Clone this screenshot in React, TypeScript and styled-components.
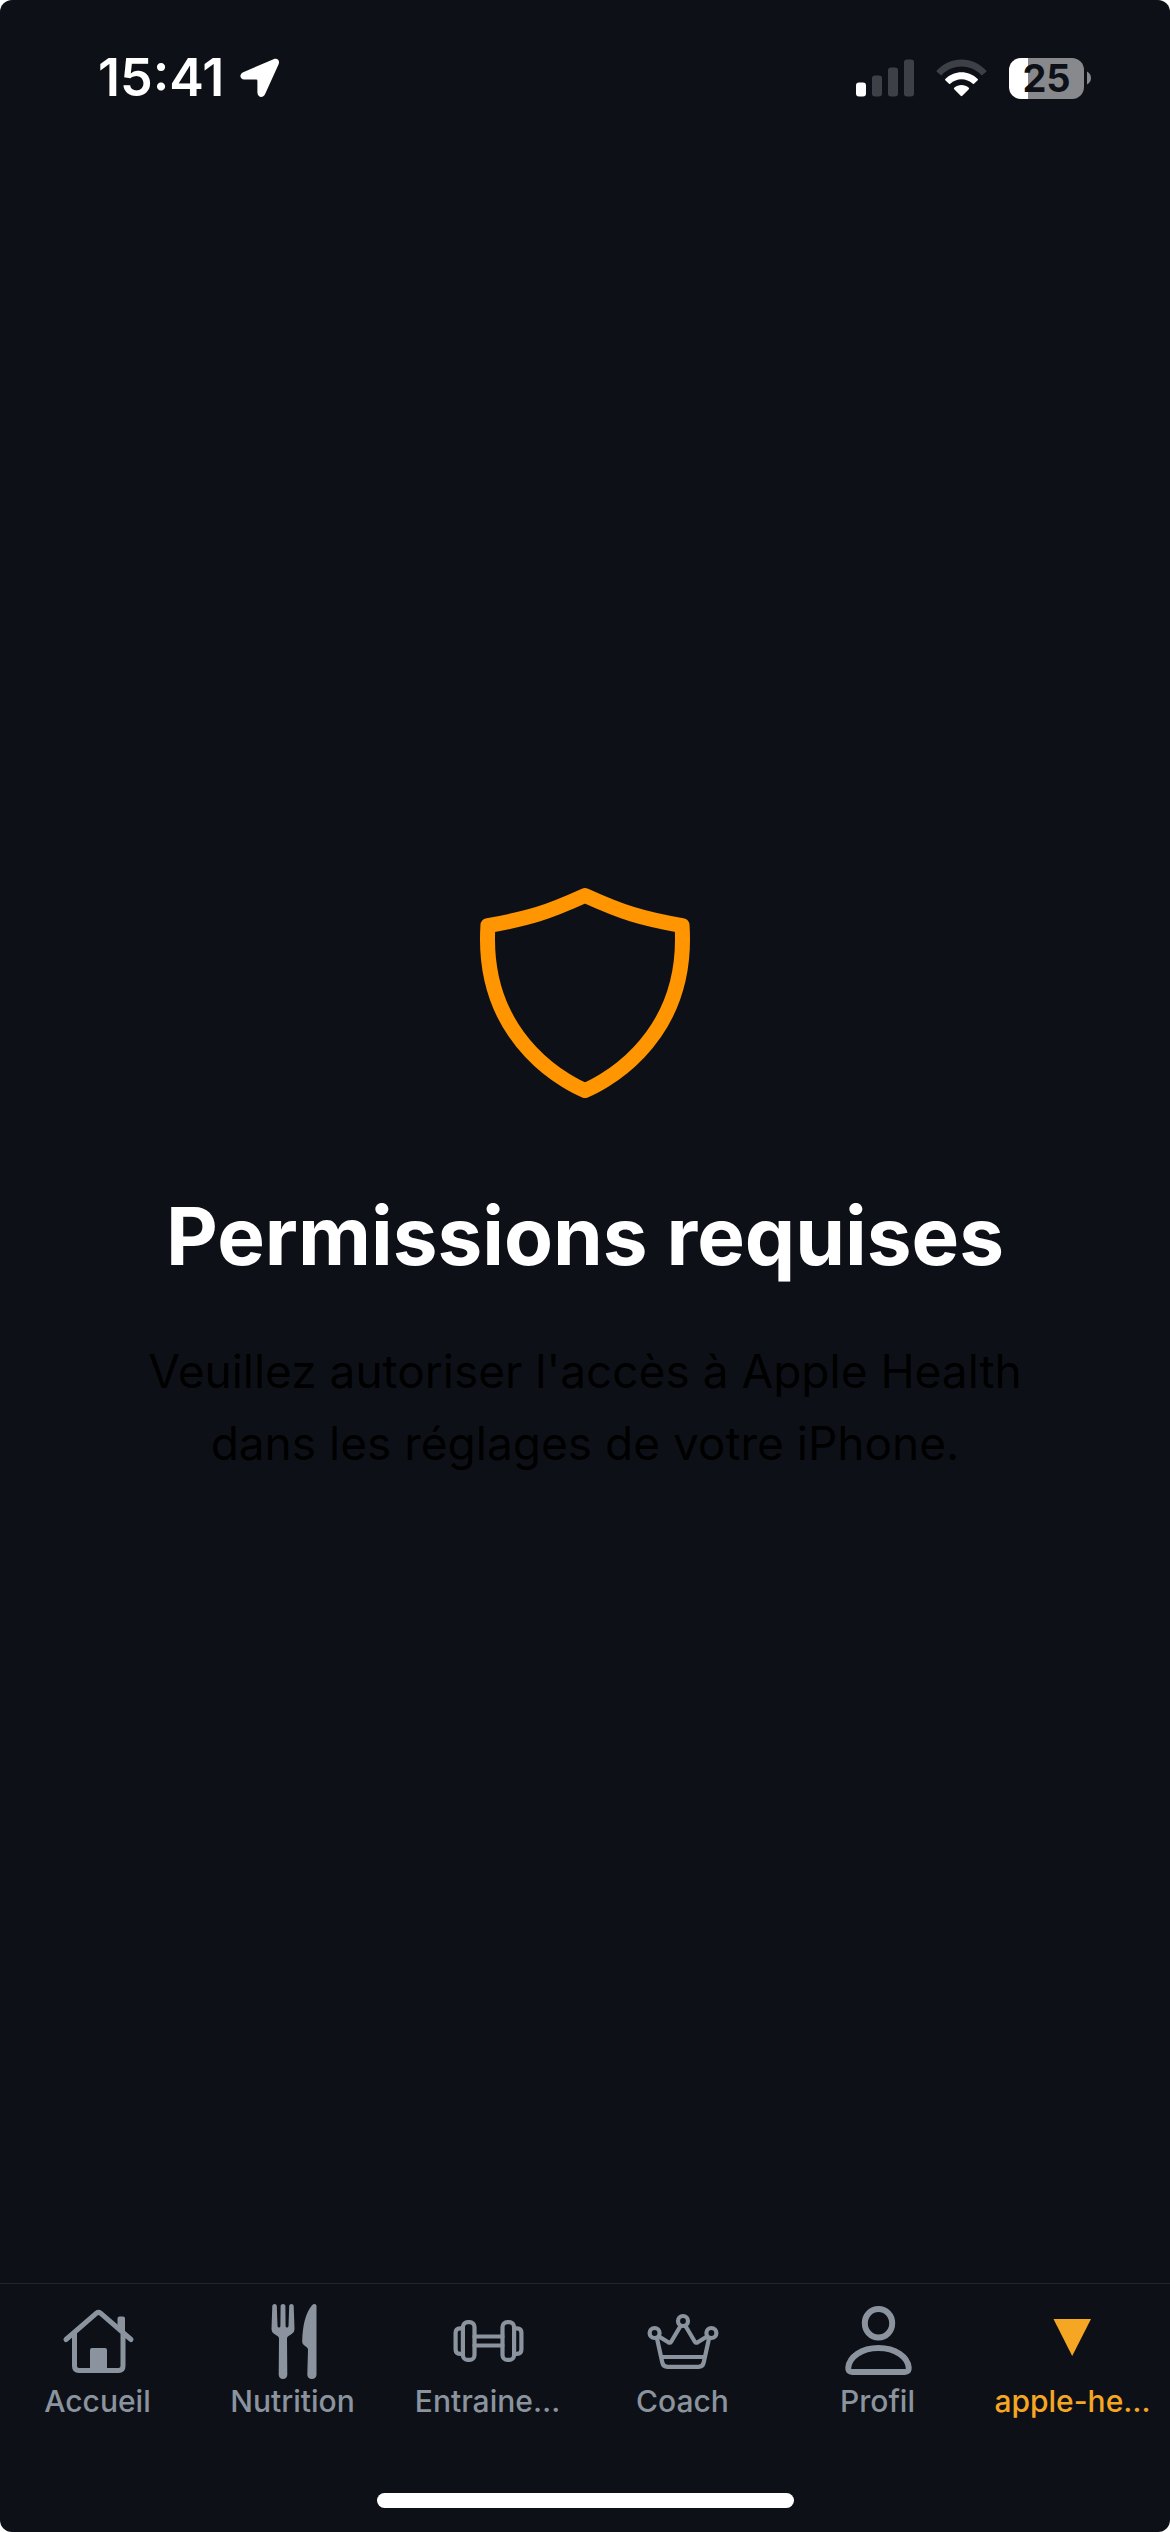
import React from "react";
import styled, { createGlobalStyle } from "styled-components";

const GlobalStyle = createGlobalStyle`
  *, *::before, *::after { box-sizing: border-box; }
  body {
    margin: 0;
    background: #fff;
    font-family: Inter, "Liberation Sans", sans-serif;
    -webkit-font-smoothing: antialiased;
  }
`;

const Screen = styled.div`
  display: flex;
  flex-direction: column;
  min-height: 100vh;
  background: #0d1117;
  border-radius: 12px;
  overflow: hidden;
`;

const StatusBar = styled.header`
  display: flex;
  align-items: center;
  justify-content: space-between;
  padding: 48px 79px 32px 98px;
  color: #fff;
`;

const StatusGroup = styled.div<{ $gap: number }>`
  display: flex;
  align-items: center;
  gap: ${(p) => p.$gap}px;
`;

const Clock = styled.time`
  font-size: 52px;
  line-height: 60px;
  font-weight: 600;
`;

const Battery = styled.div`
  display: flex;
  align-items: center;
  gap: 3px;
`;

const BatteryBody = styled.div<{ $level: number }>`
  width: 75px;
  height: 41px;
  border-radius: 12px;
  background: linear-gradient(
    to right,
    #fff ${(p) => p.$level}%,
    #88898d ${(p) => p.$level}%
  );
  color: #0d1117;
  font-size: 38px;
  line-height: 41px;
  font-weight: 700;
  text-align: center;
`;

const Main = styled.main`
  flex: 1;
  display: flex;
  flex-direction: column;
  align-items: center;
  justify-content: center;
  padding: 0 120px 72px;
  text-align: center;
`;

const Title = styled.h1`
  margin: 73px 0 49px;
  color: #fff;
  font-size: 80px;
  line-height: 100px;
  font-weight: 700;
`;

const Message = styled.p`
  margin: 0;
  max-width: 930px;
  color: #000;
  font-size: 46px;
  line-height: 72px;
`;

const TabBar = styled.nav`
  display: grid;
  grid-template-columns: repeat(6, minmax(0, 1fr));
  padding-top: 16px;
  border-top: 1px solid #21262d;
`;

const Tab = styled.button<{ $active?: boolean }>`
  display: flex;
  flex-direction: column;
  align-items: center;
  gap: 3px;
  padding: 0;
  border: 0;
  background: none;
  color: ${(p) => (p.$active ? "#f5a623" : "#8b949e")};
  font: 500 30px/36px Inter, "Liberation Sans", sans-serif;
  white-space: nowrap;
  cursor: pointer;
`;

const HomeArea = styled.footer`
  display: flex;
  justify-content: center;
  padding: 74px 0 24px;
`;

const HomeIndicator = styled.div`
  width: 417px;
  height: 15px;
  border-radius: 8px;
  background: #fff;
`;

const LocationIcon = () => (
  <svg width="40" height="40" viewBox="0 0 40 40" fill="#fff" aria-hidden="true">
    <path d="M33.5 1.2 3.2 14.2C-1 16.2-.3 21.3 4.2 21.6H16.2q1.2 0 1.2 1.2V34.5c.3 5 5.400 6 7.600 1.800L38.500 6.500C40.200 2.500 37.500-.4 33.500 1.200z" />
  </svg>
);

const SignalIcon = () => (
  <svg width="58" height="38" viewBox="0 0 58 38" fill="#3d4046" aria-hidden="true">
    <rect x="0" y="23.500" width="10" height="14" rx="3" fill="#fff" />
    <rect x="16" y="16.500" width="10" height="21" rx="3" />
    <rect x="32" y="8.500" width="10" height="29" rx="3" />
    <rect x="48" y="0.500" width="10" height="37" rx="3" />
  </svg>
);

const WifiIcon = () => (
  <svg width="51" height="38" viewBox="0 0 51 38" aria-hidden="true">
    <path
      d="M.8 11.500C14.500-3.200 36.500-3.200 50.200 11.500q.6.700 0 1.300L46.400 16q-.6.500-1.200-.1C34 4.800 17 4.800 5.800 15.900q-.6.600-1.200.1L.8 12.800q-.6-.6 0-1.300z"
      fill="#3d4046"
    />
    <path
      d="M9.300 20C18.300 10.900 32.700 10.900 41.700 20q.6.700 0 1.300L38 24.700q-.6.500-1.200 0C30.300 18.700 20.700 18.700 14.200 24.700q-.6.500-1.200 0L9.300 21.300q-.6-.6 0-1.300z"
      fill="#fff"
    />
    <path
      d="M18.200 28.800C22.400 25 28.600 25 32.800 28.800q.7.700 0 1.400L26.300 36.800q-.8.800-1.600 0L18.200 30.200q-.7-.7 0-1.400z"
      fill="#fff"
    />
  </svg>
);

const BatteryTip = () => (
  <svg width="4" height="14" viewBox="0 0 4 14" aria-hidden="true">
    <path d="M0 0.500C5.300 3 5.300 11 0 13.500z" fill="#88898d" />
  </svg>
);

const ShieldIcon = () => (
  <svg width="240" height="240" viewBox="0 0 512 512" aria-hidden="true">
    <path
      d="M463.1 112.37C373.68 96.33 336.71 84.45 256 48c-80.71 36.45-117.68 48.33-207.1 64.37C32.7 369.13 240.58 457.79 256 464c15.42-6.21 223.3-94.87 207.1-351.63z"
      fill="none"
      stroke="#ff9500"
      strokeWidth="32"
      strokeLinecap="round"
      strokeLinejoin="round"
    />
  </svg>
);

const TabIcon = ({ children }: { children: React.ReactNode }) => (
  <svg
    width="80"
    height="80"
    viewBox="0 0 80 80"
    fill="none"
    stroke="currentColor"
    strokeLinecap="round"
    strokeLinejoin="round"
    aria-hidden="true"
  >
    {children}
  </svg>
);

const HomeGlyph = () => (
  <TabIcon>
    <path d="M8 39.500 38.500 13.200q2-1.600 4 0L73 39.500M16.500 34V66q0 4.500 4.500 4.500H60.500q4.500 0 4.500-4.500V34" strokeWidth="5" />
    <path d="M59.500 27V18.500q0-2 2-2H65q2 0 2 2V36zM32 71V50q0-2 2-2H47q2 0 2 2V71z" fill="currentColor" stroke="none" />
  </TabIcon>
);

const CutleryGlyph = () => (
  <TabIcon>
    <g fill="currentColor" stroke="none">
      <path d="M19.300 6C19.500 3.300 23.700 3.300 23.800 6L24.500 26q.1 1.500 1.500 1.500t1.400-1.500L27.600 6c.1-2.700 4.700-2.700 4.800 0L32.600 26q0 1.500 1.400 1.500t1.500-1.500L36.200 6c.1-2.700 4.300-2.700 4.500 0L41.500 29q.1 3-2.500 4.700l-3.800 2.500q-1.200.8-1.200 2.300L34.300 74.800c0 5.600-8.600 5.600-8.600 0L26 38.500q0-1.500-1.200-2.300L21 33.700q-2.600-1.700-2.500-4.700z" />
      <path d="M63.500 6V74.800c0 5.600-9.200 5.600-9.200 0L55 49.500q0-1.200-1-2L50.800 45Q49 43.600 49.200 41C49.700 24 53 12.500 59 5.300 60.800 3.200 63.500 3.600 63.500 6z" />
    </g>
  </TabIcon>
);

const DumbbellGlyph = () => (
  <TabIcon>
    <g strokeWidth="4.200">
      <rect x="14.900" y="22.100" width="11.600" height="37.800" rx="5" />
      <rect x="54.500" y="22.100" width="11.600" height="37.800" rx="5" />
      <path d="M14.900 28.400H12q-4.400 0-4.400 4.400V49.500q0 4.400 4.400 4.400h2.900M66.100 28.400H69q4.400 0 4.400 4.400V49.500q0 4.400-4.400 4.400h-2.900M26.500 36.500h28M26.500 45.500h28" />
    </g>
  </TabIcon>
);

const CrownGlyph = () => (
  <TabIcon>
    <g strokeWidth="4.200">
      <circle cx="40" cy="21" r="5" />
      <circle cx="11.600" cy="33" r="5" />
      <circle cx="68.400" cy="33" r="5" />
      <path d="M16 36.500 25.300 42.300q1.800 1 3-.8L37.500 26M64 36.500 54.700 42.300q-1.800 1-3-.8L42.500 26M14 38.500 19.300 62.500Q20.200 66.800 24.500 66.800H55.500Q59.800 66.800 60.700 62.500L66 38.500M18.500 57H61.500" />
    </g>
  </TabIcon>
);

const PersonGlyph = () => (
  <TabIcon>
    <g strokeWidth="6">
      <ellipse cx="40.500" cy="23.300" rx="13.700" ry="14.300" />
      <path d="M14.500 72H66.500C70 72 71 70.500 70.700 67.500 69.500 57 57.500 48 40.500 48S11.500 57 10.300 67.500C10 70.500 11 72 14.500 72z" />
    </g>
  </TabIcon>
);

const TriangleGlyph = () => (
  <TabIcon>
    <path d="M20.500 19H58L39.200 56z" fill="currentColor" stroke="none" />
  </TabIcon>
);

const tabs = [
  { label: "Accueil", Glyph: HomeGlyph },
  { label: "Nutrition", Glyph: CutleryGlyph },
  { label: "Entraine…", Glyph: DumbbellGlyph },
  { label: "Coach", Glyph: CrownGlyph },
  { label: "Profil", Glyph: PersonGlyph },
  { label: "apple-he…", Glyph: TriangleGlyph, active: true },
];

export default function App() {
  return (
    <>
      <GlobalStyle />
      <Screen lang="fr">
        <StatusBar>
          <StatusGroup $gap={16}>
            <Clock>15:41</Clock>
            <LocationIcon />
          </StatusGroup>
          <StatusGroup $gap={22}>
            <SignalIcon />
            <WifiIcon />
            <Battery>
              <BatteryBody $level={25}>25</BatteryBody>
              <BatteryTip />
            </Battery>
          </StatusGroup>
        </StatusBar>
        <Main>
          <ShieldIcon />
          <Title>Permissions requises</Title>
          <Message>
            Veuillez autoriser l'accès à Apple Health dans les réglages de votre iPhone.
          </Message>
        </Main>
        <TabBar>
          {tabs.map(({ label, Glyph, active }) => (
            <Tab key={label} type="button" $active={active} aria-current={active ? "page" : undefined}>
              <Glyph />
              <span>{label}</span>
            </Tab>
          ))}
        </TabBar>
        <HomeArea>
          <HomeIndicator />
        </HomeArea>
      </Screen>
    </>
  );
}
